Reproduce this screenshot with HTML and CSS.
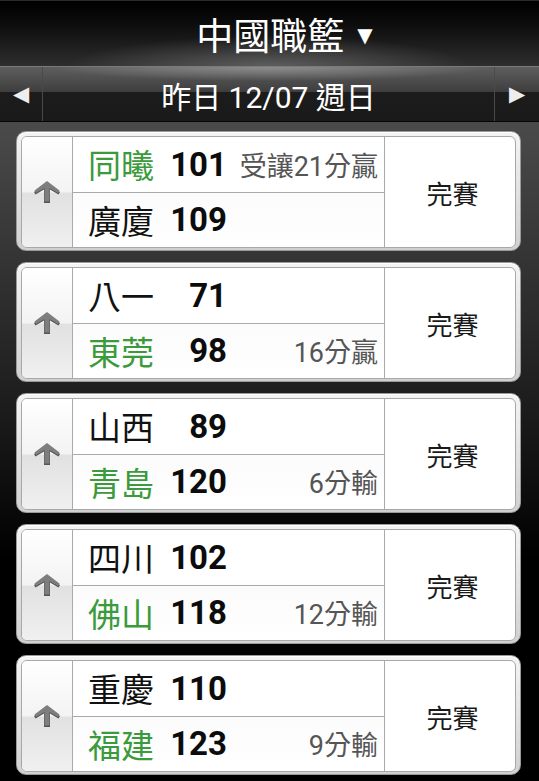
FILE: index.html
```html
<!DOCTYPE html>
<html lang="zh-Hant">
<head>
    <meta charset="UTF-8">
    <meta name="viewport" content="width=device-width, initial-scale=1.0">
    <title>中國職籃</title>
    <link rel="stylesheet" href="styles.css">
</head>
<body>

    <div class="header">
        <span class="title">中國職籃</span>
        <span class="caret">&#9660;</span>
    </div>

    <div class="nav">
        <div class="nav-btn">&#9664;</div>
        <div class="nav-date">昨日 12/07 週日</div>
        <div class="nav-btn">&#9654;</div>
    </div>

    <div class="list" id="gameList"></div>

    <script>
        // 比賽資料
        const games = [
            { home: '同曦', homeScore: 101, homeWin: true, note: '受讓21分贏', noteRow: 0, away: '廣廈', awayScore: 109, awayWin: false },
            { home: '八一', homeScore: 71, homeWin: false, away: '東莞', awayScore: 98, awayWin: true, note: '16分贏', noteRow: 1 },
            { home: '山西', homeScore: 89, homeWin: false, away: '青島', awayScore: 120, awayWin: true, note: '6分輸', noteRow: 1 },
            { home: '四川', homeScore: 102, homeWin: false, away: '佛山', awayScore: 118, awayWin: true, note: '12分輸', noteRow: 1 },
            { home: '重慶', homeScore: 110, homeWin: false, away: '福建', awayScore: 123, awayWin: true, note: '9分輸', noteRow: 1 }
        ];

        const arrowSvg = '<svg class="arrow" width="28" height="24" viewBox="0 0 28 24">' +
            '<path d="M14 2 L27 12 L25.5 14.5 L17 9.5 L17 23 L11 23 L11 9.5 L2.5 14.5 L1 12 Z" fill="#555"/>' +
            '<path d="M14 1 L26.5 10.5 L25 13 L16.5 8 L16.5 21.5 L11.5 21.5 L11.5 8 L3 13 L1.5 10.5 Z" fill="#7e7e7e"/>' +
            '</svg>';

        function teamRow(name, score, win, note) {
            return '<div class="row">' +
                '<span class="team' + (win ? ' win' : '') + '">' + name + '</span>' +
                '<span class="score">' + score + '</span>' +
                '<span class="note">' + (note || '') + '</span>' +
                '</div>';
        }

        const list = document.getElementById('gameList');
        games.forEach(game => {
            const card = document.createElement('div');
            card.className = 'card';
            card.innerHTML =
                '<div class="panel">' +
                    '<div class="side">' + arrowSvg + '</div>' +
                    '<div class="rows">' +
                        teamRow(game.home, game.homeScore, game.homeWin, game.noteRow === 0 ? game.note : '') +
                        teamRow(game.away, game.awayScore, game.awayWin, game.noteRow === 1 ? game.note : '') +
                    '</div>' +
                    '<div class="status">完賽</div>' +
                '</div>';
            list.appendChild(card);
        });
    </script>

</body>
</html>
```

FILE: styles.css
```css
body {
    margin: 0;
    font-family: Roboto, "Noto Sans CJK TC", sans-serif;
    background: linear-gradient(#4a4a4a 0, #4a4a4a 125px, #1a1a1a 420px, #000 560px, #000 100%);
    min-height: 781px;
    overflow: hidden;
}

.header {
    height: 66px;
    display: flex;
    align-items: center;
    justify-content: center;
    gap: 13px;
    padding-left: 30px;
    color: #fff;
    border-top: 1px solid #2a2a2a;
    box-sizing: border-box;
    background:
        radial-gradient(ellipse 200px 30px at 50% 100%, rgba(150,150,150,0.45), rgba(150,150,150,0) 100%),
        linear-gradient(#000 0, #0c0c0c 35%, #2e2e2e 100%);
}

.title {
    font-family: "Noto Sans CJK TC", sans-serif;
    font-size: 37px;
    line-height: 1;
    padding-top: 2px;
}

.caret {
    font-family: "DejaVu Sans", sans-serif;
    font-size: 20px;
    padding-top: 2px;
}

.nav {
    height: 56px;
    display: flex;
    border-top: 1px solid #7a7a7a;
    border-bottom: 1px solid #050505;
    box-sizing: border-box;
    background:
        radial-gradient(ellipse 220px 14px at 50% 0, rgba(190,190,190,0.5), rgba(190,190,190,0) 100%),
        linear-gradient(#5e5e5e 0, #3e3e3e 46%, #1c1c1c 47%, #1a1a1a 100%);
    color: #fff;
}

.nav-btn {
    width: 42px;
    display: flex;
    align-items: center;
    justify-content: center;
    font-family: "DejaVu Sans", sans-serif;
    font-size: 21px;
    color: #eee;
}

.nav-btn:first-child {
    border-right: 1px solid #4a4a4a;
}

.nav-btn:last-child {
    width: 44px;
    border-left: 1px solid #4a4a4a;
}

.nav-date {
    flex: 1;
    display: flex;
    align-items: center;
    justify-content: center;
    font-size: 30px;
    padding-top: 1px;
}

.list {
    display: flex;
    flex-direction: column;
    gap: 11px;
    padding: 9px 18px 0 16px;
}

.card {
    height: 120px;
    box-sizing: border-box;
    padding: 4px;
    border-radius: 10px;
    background: linear-gradient(#f4f4f4, #d0d0d0);
    border: 1px solid #9a9a9a;
    box-shadow: inset 0 1px 0 #fff;
}

.panel {
    height: 100%;
    display: flex;
    border: 1px solid #a8a8a8;
    border-radius: 6px;
    overflow: hidden;
    background: #fff;
}

.side {
    width: 50px;
    border-right: 1px solid #aaa;
    display: flex;
    align-items: center;
    justify-content: center;
    background: linear-gradient(#ffffff 0, #f3f3f3 50%, #e1e1e1 51%, #f0f0f0 100%);
}

.rows {
    flex: 1;
    display: flex;
    flex-direction: column;
}

.row {
    flex: 1;
    display: flex;
    align-items: center;
    padding: 0 6px 0 15px;
}

.row:first-child {
    border-bottom: 1px solid #aaa;
}

.row:last-child {
    background: linear-gradient(#fbfbfb, #fff);
}

.team {
    font-family: "Noto Sans CJK TC", sans-serif;
    font-size: 33px;
    color: #111;
    width: 72px;
}

.team.win {
    color: #3b9a3b;
}

.score {
    width: 67px;
    text-align: right;
    font-weight: bold;
    font-size: 33px;
    color: #0c0c0c;
}

.note {
    flex: 1;
    text-align: right;
    font-size: 27px;
    color: #555;
}

.status {
    width: 131px;
    box-sizing: border-box;
    padding-left: 5px;
    border-left: 1px solid #aaa;
    display: flex;
    align-items: center;
    justify-content: center;
    font-family: "Noto Sans CJK TC", sans-serif;
    font-size: 26px;
    color: #1a1a1a;
}
```
